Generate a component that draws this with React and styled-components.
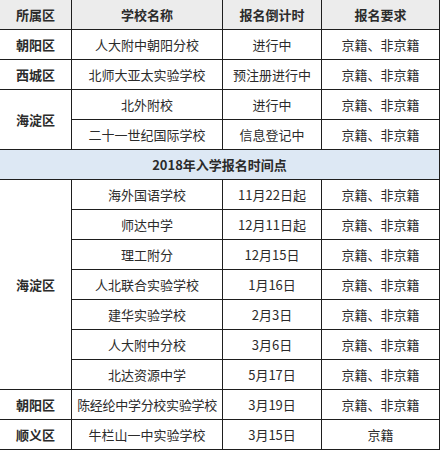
import React from 'react';
import styled, { createGlobalStyle } from 'styled-components';

const GlobalStyle = createGlobalStyle`
  html, body {
    margin: 0;
    padding: 0;
    background: #ffffff;
  }
  body {
    font-family: "Microsoft YaHei", "Noto Sans CJK SC", "Noto Sans", sans-serif;
    overflow: hidden;
  }
`;

const Table = styled.table`
  border-collapse: collapse;
  table-layout: fixed;
  width: 440px;
  margin: -1px 0 0 -1px;
  font-size: 13px;
  color: #2b2b2b;
`;

const Row = styled.tr`
  height: 30px;
  background: ${p => p.$tone === 'head' ? '#ececec' : p.$tone === 'section' ? '#dde8f4' : '#ffffff'};
`;

const Cell = styled.td`
  border: 1px solid #1e1e1e;
  padding: 0;
  text-align: center;
  vertical-align: middle;
  white-space: nowrap;
  font-weight: ${p => (p.$bold ? 700 : 400)};
  letter-spacing: ${p => (p.$tight ? '-0.3px' : '0')};
`;

const HeadCell = styled.th`
  border: 1px solid #1e1e1e;
  padding: 0;
  text-align: center;
  font-weight: 700;
  white-space: nowrap;
`;

const both = '京籍、非京籍';

const top = [
  { area: '朝阳区', school: '人大附中朝阳分校', time: '进行中', req: both },
  { area: '西城区', school: '北师大亚太实验学校', time: '预注册进行中', req: both },
  { area: '海淀区', span: 2, school: '北外附校', time: '进行中', req: both },
  { school: '二十一世纪国际学校', time: '信息登记中', req: both },
];

const bottom = [
  { area: '海淀区', span: 7, school: '海外国语学校', time: '11月22日起', req: both },
  { school: '师达中学', time: '12月11日起', req: both },
  { school: '理工附分', time: '12月15日', req: both },
  { school: '人北联合实验学校', time: '1月16日', req: both },
  { school: '建华实验学校', time: '2月3日', req: both },
  { school: '人大附中分校', time: '3月6日', req: both },
  { school: '北达资源中学', time: '5月17日', req: both },
  { area: '朝阳区', school: '陈经纶中学分校实验学校', time: '3月19日', req: both },
  { area: '顺义区', school: '牛栏山一中实验学校', time: '3月15日', req: '京籍' },
];

const renderRow = (r, i) => (
  <Row key={i}>
    {r.area && <Cell $bold rowSpan={r.span || 1}>{r.area}</Cell>}
    <Cell $tight={r.school.length > 10}>{r.school}</Cell>
    <Cell>{r.time}</Cell>
    <Cell>{r.req}</Cell>
  </Row>
);

const App = () => (
  <>
    <GlobalStyle />
    <Table>
      <colgroup>
        <col style={{ width: 72 }} />
        <col style={{ width: 151 }} />
        <col style={{ width: 99 }} />
        <col style={{ width: 118 }} />
      </colgroup>
      <thead>
        <Row $tone="head">
          <HeadCell>所属区</HeadCell>
          <HeadCell>学校名称</HeadCell>
          <HeadCell>报名倒计时</HeadCell>
          <HeadCell>报名要求</HeadCell>
        </Row>
      </thead>
      <tbody>
        {top.map(renderRow)}
        <Row $tone="section">
          <Cell $bold colSpan={4}>2018年入学报名时间点</Cell>
        </Row>
        {bottom.map((r, i) => renderRow(r, 'b' + i))}
      </tbody>
    </Table>
  </>
);

export default App;
